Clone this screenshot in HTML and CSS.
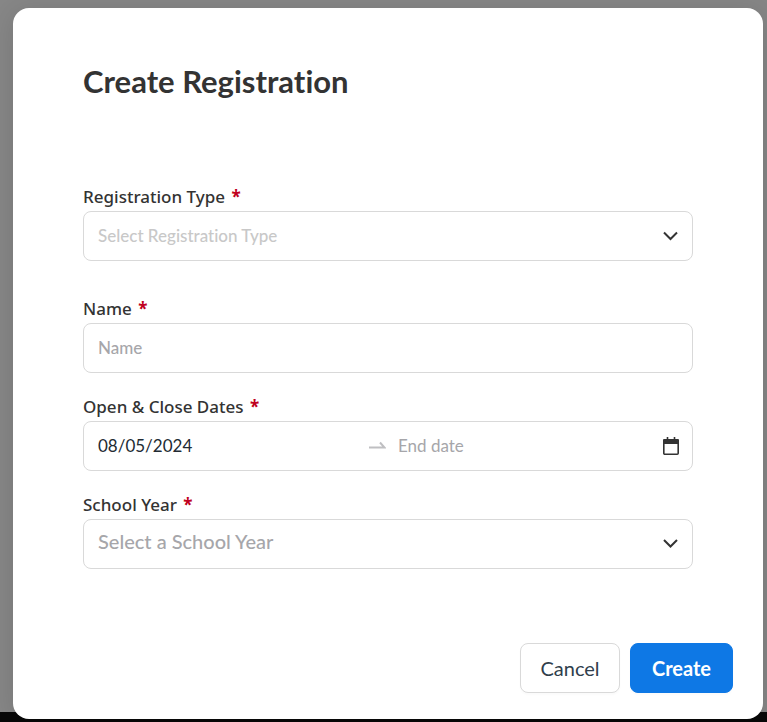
FILE: index.html
```html
<!DOCTYPE html>
<html lang="en">
<head>
<meta charset="utf-8">
<meta name="viewport" content="width=device-width, initial-scale=1">
<title>Create Registration</title>
<link rel="stylesheet" href="styles.css">
</head>
<body>
<main class="backdrop">
  <form class="modal" role="dialog" aria-labelledby="title">
    <div class="modal-body">
      <h1 class="title" id="title">Create Registration</h1>
      <div class="field field-type">
        <label class="label" for="type">Registration Type <span class="required">*</span></label>
        <div class="control">
          <select class="input select faint" id="type" required>
            <option value="">Select Registration Type</option>
          </select>
          <svg class="icon" viewBox="0 0 16 16" aria-hidden="true"><path d="M1 4.500 7.500 11 14 4.500"/></svg>
        </div>
      </div>
      <div class="field">
        <label class="label" for="name">Name <span class="required">*</span></label>
        <div class="control">
          <input class="input" id="name" type="text" placeholder="Name" required>
        </div>
      </div>
      <div class="field">
        <label class="label" for="start">Open &amp; Close Dates <span class="required">*</span></label>
        <div class="control">
          <input class="input date" id="start" type="text" value="08/05/2024" required>
          <svg class="arrow" viewBox="0 0 18 16" aria-hidden="true"><path d="M1 9.500h15.500L12 4.500"/></svg>
          <input class="input date end" type="text" placeholder="End date" aria-label="End date" required>
          <svg class="icon calendar" viewBox="0 0 16 18" aria-hidden="true"><path class="solid" d="M1 2h14a1 1 0 0 1 1 1v4H0V3a1 1 0 0 1 1-1z"/><path d="M.8 6v10.200a1 1 0 0 0 1 1h12.400a1 1 0 0 0 1-1V6M4.500 0v3M11.500 0v3"/></svg>
        </div>
      </div>
      <div class="field">
        <label class="label" for="year">School Year <span class="required">*</span></label>
        <div class="control">
          <select class="input select large" id="year" required>
            <option value="">Select a School Year</option>
          </select>
          <svg class="icon" viewBox="0 0 16 16" aria-hidden="true"><path d="M1 4 7.500 10.500 14 4"/></svg>
        </div>
      </div>
    </div>
    <footer class="actions">
      <button class="button" type="button">Cancel</button>
      <button class="button primary" type="submit">Create</button>
    </footer>
  </form>
</main>
</body>
</html>
```
FILE: styles.css
```css
* {
  box-sizing: border-box;
}

body {
  margin: 0;
  font-family: Lato, sans-serif;
  font-variant-ligatures: none;
  color: #333;
}

.backdrop {
  min-height: 100vh;
  padding: 8px 4px 3px 13px;
  background: linear-gradient(to top, #080808 10px, #868686 10px);
}

.modal {
  display: flex;
  flex-direction: column;
  min-height: calc(100vh - 11px);
  border-radius: 16px;
  background: #fff;
  box-shadow: 0 4px 24px rgba(0, 0, 0, 0.12);
}

.modal-body {
  flex: 1;
  padding: 55px 70px 0;
}

.title {
  margin: 0 0 88px;
  font-size: 31px;
  line-height: 36px;
  font-weight: 700;
}

.field {
  margin-bottom: 24px;
}

.field-type {
  margin-bottom: 38px;
}

.label {
  display: block;
  padding-bottom: 4px;
  font-family: "Noto Sans", "Open Sans", sans-serif;
  font-size: 17px;
  font-weight: 500;
  line-height: 20px;
}

.required {
  margin-left: 2px;
  color: #c00020;
  font-weight: 700;
}

.control {
  display: flex;
  align-items: center;
  position: relative;
  height: 50px;
  border: 1px solid #d9d9d9;
  border-radius: 8px;
}

.input {
  flex: 1;
  min-width: 0;
  height: 100%;
  padding: 0 14px 2px;
  border: 0;
  outline: 0;
  background: none;
  font: 500 17px Lato, sans-serif;
  font-variant-ligatures: none;
  color: #222b33;
}

.input::placeholder {
  color: #a6a6aa;
  opacity: 1;
}

.select {
  appearance: none;
  color: #a6a6aa;
}

.faint {
  color: #c8c8c8;
}

.large {
  padding-bottom: 6px;
  font-size: 20px;
}

.date {
  font-weight: 400;
}

.date.end {
  flex-basis: 50px;
  padding-left: 12px;
}

.arrow {
  width: 18px;
  height: 16px;
  fill: none;
  stroke: #bfbfc2;
  stroke-width: 2;
}

.icon {
  position: absolute;
  right: 13px;
  width: 16px;
  height: 16px;
  fill: none;
  stroke: #333;
  stroke-width: 2;
  pointer-events: none;
}

.calendar {
  height: 18px;
}

.calendar path {
  stroke-width: 1.6;
}

.calendar .solid {
  fill: #333;
  stroke: none;
}

.actions {
  display: flex;
  justify-content: flex-end;
  gap: 10px;
  padding: 0 30px 26px;
}

.button {
  min-width: 100px;
  height: 50px;
  padding: 0 18px;
  border: 1px solid #d9d9d9;
  border-radius: 8px;
  background: #fff;
  box-shadow: 0 2px 2px rgba(0, 0, 0, 0.02);
  font: 400 20px Lato, sans-serif;
  color: #2f3e4c;
}

.primary {
  min-width: 103px;
  border-color: #0e78e5;
  background: #0e78e5;
  font-weight: 700;
  color: #fff;
}
```
